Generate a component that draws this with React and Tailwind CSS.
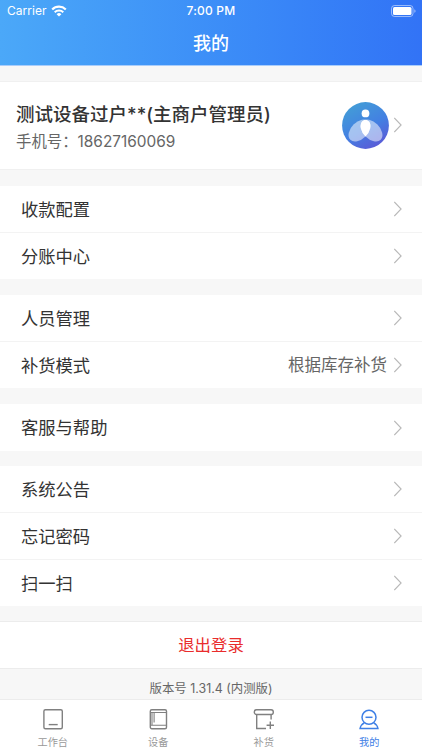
import { useState } from "react";

const groups = [
  [{ title: "收款配置" }, { title: "分账中心" }],
  [{ title: "人员管理" }, { title: "补货模式", value: "根据库存补货" }],
  [{ title: "客服与帮助" }],
  [{ title: "系统公告" }, { title: "忘记密码" }, { title: "扫一扫" }],
];

// row heights, the design width does not divide into whole pixels
const groupHeights = ["h-[93px]", "h-[93px]", "h-[47px]", "h-[140px]"];
const groupMargins = ["mt-4", "mt-4", "mt-4", "mt-[15px]"];

function Arrow() {
  return (
    <svg className="shrink-0" width="8" height="16" viewBox="0 0 8 16" fill="none" stroke="#b8b8b8" strokeWidth="1.1">
      <path d="M0.3 1L7.1 8L0.3 15" />
    </svg>
  );
}

function StatusBar() {
  return (
    <div className="relative flex justify-between items-center h-[22px] pl-[7px] pr-[6px] text-white">
      <div className="flex items-center gap-1">
        <span className="text-[12px] tracking-[0.05px]">Carrier</span>
        <svg width="16" height="12" viewBox="0 0 16 12">
          <path d="M1.2 4.5A9.7 9.7 0 0 1 14.8 4.5" fill="none" stroke="#fff" strokeWidth="2.2" />
          <path d="M3.7 7.2A6.2 6.2 0 0 1 12.3 7.2" fill="none" stroke="#fff" strokeWidth="2" />
          <path d="M8 11.6L5.6 9.2A3.5 3.5 0 0 1 10.4 9.2Z" fill="#fff" />
        </svg>
      </div>
      <span className="absolute left-0 w-full text-center text-[12px] font-medium tracking-[0.2px]">
        7:00 PM
      </span>
      <svg width="25" height="12" viewBox="0 0 25 12">
        <rect x="0.5" y="0.5" width="21.5" height="11" rx="3" fill="none" stroke="#fff" strokeOpacity="0.5" />
        <rect x="2" y="2" width="18.5" height="8" rx="1.5" fill="#fff" />
        <path d="M23.3 4.2Q24.6 4.6 24.6 6Q24.6 7.4 23.3 7.8Z" fill="#fff" fillOpacity="0.5" />
      </svg>
    </div>
  );
}

function Avatar() {
  return (
    <svg className="shrink-0" width="47" height="47" viewBox="0 0 47 47">
      <defs>
        <linearGradient id="avatarBg" x1="0.2" y1="0" x2="0.75" y2="1">
          <stop offset="0" stopColor="#439fd6" />
          <stop offset="0.55" stopColor="#4380e2" />
          <stop offset="1" stopColor="#5c58d6" />
        </linearGradient>
        <clipPath id="leftWing">
          <ellipse cx="17.5" cy="28.5" rx="13" ry="8.4" transform="rotate(-45 17.5 28.5)" />
        </clipPath>
      </defs>
      <circle cx="23.5" cy="23.5" r="23.4" fill="url(#avatarBg)" />
      <ellipse cx="17.5" cy="28.5" rx="13" ry="8.4" transform="rotate(-45 17.5 28.5)" fill="#fff" fillOpacity="0.52" />
      <ellipse cx="29.5" cy="28.5" rx="13" ry="8.4" transform="rotate(45 29.5 28.5)" fill="#fff" fillOpacity="0.52" />
      <g clipPath="url(#leftWing)">
        <ellipse cx="29.5" cy="28.5" rx="13" ry="8.4" transform="rotate(45 29.5 28.5)" fill="#fff" />
      </g>
      <circle cx="23.5" cy="11.4" r="3.9" fill="#fff" />
    </svg>
  );
}

function WorkbenchIcon() {
  return (
    <svg className="shrink-0" width="22" height="22" viewBox="0 0 22 22" fill="none" stroke="currentColor" strokeWidth="1.4">
      <rect x="1.9" y="1.7" width="18.4" height="19" rx="1.5" />
      <path d="M6.7 16.6H15.7" />
    </svg>
  );
}

function DeviceIcon() {
  return (
    <svg className="shrink-0" width="22" height="22" viewBox="0 0 22 22" fill="none" stroke="currentColor" strokeWidth="1.4">
      <rect x="3.3" y="1.7" width="16.2" height="19" rx="1.5" />
      <path d="M3.3 4.5H19.5M3.3 17.3H19.5M5 4.5V17.3M7.1 4.5V14.5" strokeWidth="1.1" />
    </svg>
  );
}

function RestockIcon() {
  return (
    <svg className="shrink-0" width="22" height="22" viewBox="0 0 22 22" fill="none" stroke="currentColor" strokeWidth="1.4">
      <rect x="1.3" y="1.7" width="19" height="4.8" rx="2.2" />
      <path d="M3.7 6.5V20.5H13M18.1 6.5V11.5" />
      <path d="M13.6 17.3H21M17.3 13.6V21" />
    </svg>
  );
}

function MineIcon() {
  return (
    <svg className="shrink-0" width="22" height="22" viewBox="0 0 22 22" fill="none" stroke="currentColor" strokeWidth="1.5">
      <circle cx="11" cy="9.3" r="7" />
      <path d="M7.5 9.3H14.5" />
      <path d="M6.3 14.8Q2.8 16.6 2.1 20.4H19.9Q19.2 16.6 15.7 14.8" />
    </svg>
  );
}

const tabs = [
  { name: "工作台", icon: WorkbenchIcon },
  { name: "设备", icon: DeviceIcon },
  { name: "补货", icon: RestockIcon },
  { name: "我的", icon: MineIcon },
];

function App() {
  const [active, setActive] = useState(3);

  return (
    <div className="flex flex-col h-[750px] w-full overflow-hidden bg-[#f7f7f7] text-[#333] font-[Inter,'Noto_Sans_CJK_SC',sans-serif]">
      <header className="h-[66px] shrink-0 bg-linear-to-r from-[#4ba8f8] to-[#3273f6] border-b border-[#a9cdfb]">
        <StatusBar />
        <h1 className="text-center text-white text-[18px] leading-[44px] font-medium">我的</h1>
      </header>

      <div className="flex justify-between items-center h-[89px] shrink-0 mt-[15px] pl-4 pr-5 bg-white border-y border-[#f0f0f0]">
        <div className="pt-1">
          <p className="text-[18.5px] leading-[28px] font-medium whitespace-nowrap">
            测试设备过户**(主商户管理员)
          </p>
          <p className="text-[15.4px] leading-[27px] text-[#666]">手机号：18627160069</p>
        </div>
        <div className="flex items-center gap-[5px] pb-px">
          <Avatar />
          <Arrow />
        </div>
      </div>

      {groups.map((rows, i) => (
        <div key={i} className={`flex flex-col shrink-0 bg-white ${groupHeights[i]} ${groupMargins[i]}`}>
          {rows.map((row, j) => (
            <div
              key={row.title}
              className={`flex flex-1 justify-between items-center pl-[21px] pr-5 ${j > 0 ? "border-t border-[#f3f3f3]" : ""}`}
            >
              <span className="pt-px text-[17.3px]">{row.title}</span>
              <div className="flex items-center gap-[7px]">
                {row.value && <span className="pt-px text-[16.5px] text-[#666]">{row.value}</span>}
                <Arrow />
              </div>
            </div>
          ))}
        </div>
      ))}

      <button className="h-12 shrink-0 mt-[15px] bg-white border-y border-[#ececec] text-[16.4px] text-[#e92c2c]">
        退出登录
      </button>
      <p className="h-[30px] shrink-0 pt-[9px] text-center text-[12.4px] leading-[22px] text-[#666]">
        版本号 1.31.4 (内测版)
      </p>

      <nav className="flex h-[51px] shrink-0 bg-white border-t border-[#ececec]">
        {tabs.map((tab, i) => (
          <button
            key={tab.name}
            onClick={() => setActive(i)}
            className={`flex flex-1 flex-col items-center pt-2 ${active === i ? "text-[#3f80e6]" : "text-[#808080]"}`}
          >
            <tab.icon />
            <span className={`pt-1 text-[10.2px] leading-[16px] ${active === i ? "" : "text-[#999]"}`}>{tab.name}</span>
          </button>
        ))}
      </nav>
    </div>
  );
}

export default App;
